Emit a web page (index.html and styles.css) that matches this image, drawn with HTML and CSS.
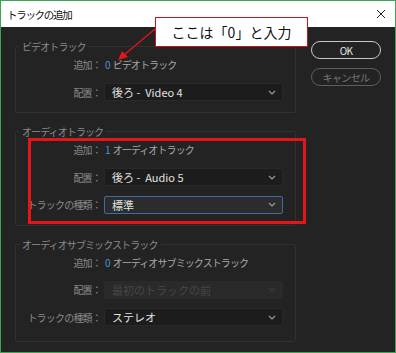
FILE: index.html
```html
<!DOCTYPE html>
<html lang="ja">
<head>
    <meta charset="UTF-8">
    <title>トラックの追加</title>
    <link rel="stylesheet" href="styles.css">
</head>
<body>

<div class="window">
    <div class="titlebar">
        <span class="title">トラックの追加</span>
        <svg class="close" width="10" height="10" viewBox="0 0 10 10">
            <path d="M1 1 L9 9 M9 1 L1 9" stroke="#222" stroke-width="1" fill="none"/>
        </svg>
    </div>

    <div class="dialog">
        <div class="groups">
            <fieldset class="group">
                <legend>ビデオトラック</legend>
                <div class="row">
                    <span class="label">追加：</span>
                    <span class="value"><span class="num">0</span>ビデオトラック</span>
                </div>
                <div class="row">
                    <span class="label">配置：</span>
                    <div class="select">
                        <span>後ろ -&nbsp; Video 4</span>
                        <svg class="chevron" width="8" height="5" viewBox="0 0 8 5"><path d="M1 1 L4 4 L7 1" stroke="#9a9a9a" stroke-width="1.2" fill="none"/></svg>
                    </div>
                </div>
            </fieldset>

            <fieldset class="group">
                <legend>オーディオトラック</legend>
                <div class="row">
                    <span class="label">追加：</span>
                    <span class="value"><span class="num">1</span>オーディオトラック</span>
                </div>
                <div class="row">
                    <span class="label">配置：</span>
                    <div class="select">
                        <span>後ろ -&nbsp; Audio 5</span>
                        <svg class="chevron" width="8" height="5" viewBox="0 0 8 5"><path d="M1 1 L4 4 L7 1" stroke="#9a9a9a" stroke-width="1.2" fill="none"/></svg>
                    </div>
                </div>
                <div class="row">
                    <span class="label">トラックの種類：</span>
                    <div class="select focused">
                        <span>標準</span>
                        <svg class="chevron" width="8" height="5" viewBox="0 0 8 5"><path d="M1 1 L4 4 L7 1" stroke="#9a9a9a" stroke-width="1.2" fill="none"/></svg>
                    </div>
                </div>
            </fieldset>

            <fieldset class="group last">
                <legend>オーディオサブミックストラック</legend>
                <div class="row">
                    <span class="label">追加：</span>
                    <span class="value"><span class="num">0</span>オーディオサブミックストラック</span>
                </div>
                <div class="row">
                    <span class="label">配置：</span>
                    <div class="select disabled">
                        <span>最初のトラックの前</span>
                        <svg class="chevron" width="8" height="5" viewBox="0 0 8 5"><path d="M1 1 L4 4 L7 1" stroke="#3c3c3c" stroke-width="1.2" fill="none"/></svg>
                    </div>
                </div>
                <div class="row">
                    <span class="label">トラックの種類：</span>
                    <div class="select">
                        <span>ステレオ</span>
                        <svg class="chevron" width="8" height="5" viewBox="0 0 8 5"><path d="M1 1 L4 4 L7 1" stroke="#9a9a9a" stroke-width="1.2" fill="none"/></svg>
                    </div>
                </div>
            </fieldset>
        </div>

        <div class="buttons">
            <button type="button" class="btn primary">OK</button>
            <button type="button" class="btn">キャンセル</button>
        </div>
    </div>

    <!-- annotations -->
    <div class="highlight"></div>
    <div class="callout">ここは「0」と入力</div>
    <svg class="arrow" width="50" height="40" viewBox="0 0 50 40">
        <path d="M39 3 L8 29" stroke="#e3171b" stroke-width="1.2" fill="none"/>
        <path d="M2 34 L6 25 L12 31 Z" fill="#e3171b"/>
    </svg>
</div>

</body>
</html>
```

FILE: styles.css
```css
body {
    margin: 0;
    background: #fff;
    font-family: "Noto Sans CJK JP", "Noto Sans", sans-serif;
}

.window {
    position: relative;
    width: 396px;
    height: 353px;
    box-sizing: border-box;
    border: 1px solid #3ba552;
    display: flex;
    flex-direction: column;
    background-color: #232323;
}

.titlebar {
    height: 26px;
    background: #fff;
    display: flex;
    align-items: center;
    justify-content: space-between;
    padding: 0 9px 0 6px;
}

.title {
    font-size: 10.5px;
    letter-spacing: -1.3px;
    color: #111;
}

.dialog {
    flex: 1;
    display: flex;
    padding-left: 14px;
}

.groups {
    width: 281px;
    padding-top: 15px;
    display: flex;
    flex-direction: column;
    gap: 14px;
}

.group {
    margin: 0;
    padding: 0 0 6px 0;
    min-width: 0;
    border: 1px solid #313131;
    border-radius: 2px;
}

.group.last {
    padding-bottom: 10px;
}

.group legend {
    margin-left: 3px;
    padding: 0 3px;
    font-size: 10px;
    line-height: 9px;
    letter-spacing: -0.9px;
    color: #8a8a8a;
}

.row {
    height: 27.5px;
    display: flex;
    align-items: center;
}

.label {
    width: 85px;
    padding-right: 3px;
    text-align: right;
    font-size: 10px;
    letter-spacing: -0.8px;
    color: #8a8a8a;
    white-space: nowrap;
}

.value {
    font-size: 10px;
    letter-spacing: -0.9px;
    color: #a8a8a8;
}

.num {
    color: #4d8fd6;
    margin-right: 3px;
    margin-left: 1px;
}

.select {
    width: 179px;
    height: 18px;
    box-sizing: border-box;
    padding: 0 6px 0 7px;
    display: flex;
    align-items: center;
    justify-content: space-between;
    background-color: #1c1c1c;
    border: 1px solid #292929;
    border-radius: 2px;
    font-size: 11px;
    letter-spacing: 0;
    color: #e2e2e2;
}

.select.focused {
    background-color: #2c2c2c;
    border-color: #3f6c9f;
    border-width: 1.5px;
}

.select.disabled {
    background-color: #2a2a2a;
    border-color: #2a2a2a;
    color: #474747;
}

.buttons {
    padding-top: 14px;
    margin-left: 15px;
    display: flex;
    flex-direction: column;
    gap: 9px;
}

.btn {
    width: 70px;
    height: 18px;
    padding: 0;
    border: 1.5px solid #5e5e5e;
    border-radius: 9px;
    background: transparent;
    font-family: inherit;
    font-size: 10px;
    letter-spacing: -0.6px;
    color: #787878;
}

.btn.primary {
    border-color: #c8c8c8;
    color: #e6e6e6;
}

/* overlays */
.highlight {
    position: absolute;
    left: 27px;
    top: 137px;
    width: 272px;
    height: 80px;
    border: 3px solid #e3171b;
}

.callout {
    position: absolute;
    left: 154px;
    top: 16px;
    width: 151px;
    height: 28px;
    border: 1px solid #c8141a;
    background: #fff;
    font-size: 14px;
    line-height: 28px;
    text-align: center;
    color: #111;
}

.arrow {
    position: absolute;
    left: 115px;
    top: 25px;
}
```
